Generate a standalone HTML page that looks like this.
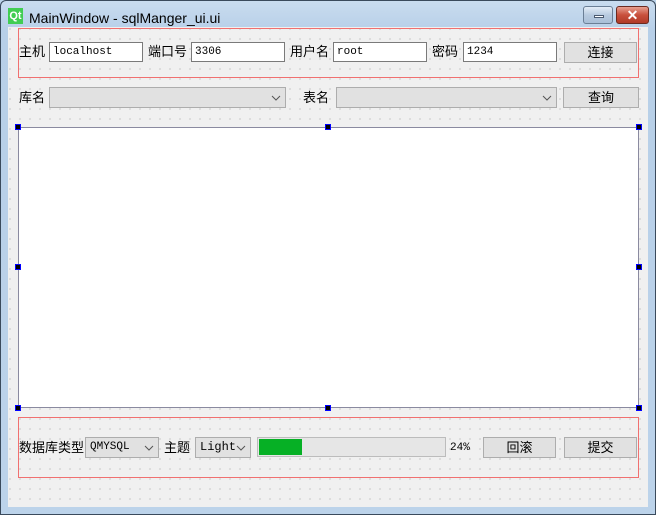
<!DOCTYPE html>
<html><head><meta charset="utf-8"><style>
*{margin:0;padding:0;box-sizing:border-box}
body{width:656px;height:515px;overflow:hidden;position:relative;background:#bcd3ea;font-family:"Liberation Sans","Noto Sans CJK SC",sans-serif;font-size:13px;color:#000}
.frame{position:absolute;left:0;top:0;width:656px;height:515px;border:1px solid #3a4a5c;border-radius:6px 6px 0 0;background:linear-gradient(#c9dcef,#b7cfe8 30px,#bcd3ea)}
.content{position:absolute;left:8px;top:27px;width:640px;height:480px;background-color:#f0f0f0;background-image:radial-gradient(circle,#a8a8a8 0.5px,transparent 0.8px);background-size:10px 10px;background-position:-3px -3px}
.a{position:absolute}
.lbl{position:absolute;font-size:13px;line-height:16px}
.in{position:absolute;height:20px;background:#fff;border:1px solid #7a7a7a;font-family:"Liberation Mono",monospace;font-size:11px;line-height:18px;padding-left:3px}
.btn{position:absolute;height:21px;background:#e1e1e1;border:1px solid #adadad;text-align:center;line-height:19px;font-size:13px}
.cb{position:absolute;height:21px;background:#e1e1e1;border:1px solid #adadad;font-family:"Liberation Mono",monospace;font-size:11px;line-height:19px;padding-left:4px}
.cb svg{position:absolute;right:4px;top:7px}
.red{position:absolute;border:1px solid #f07070}
.h{position:absolute;width:6px;height:6px;background:#000;border:1px solid #0000ff}
</style></head><body>
<div class="frame"></div>
<div class="a" style="left:8px;top:8px;width:15px;height:16px;background:#41cd52;color:#fff;font-weight:bold;font-size:11px;line-height:16px;text-align:center">Qt</div>
<div class="lbl" style="left:29px;top:10px;font-size:14px;color:#000">MainWindow - sqlManger_ui.ui</div>
<div class="a" style="left:583px;top:6px;width:30px;height:18px;border:1px solid #6b7f96;border-radius:3px;background:linear-gradient(#e4edf7,#b8cbe0 50%,#a9bfd8)"><div class="a" style="left:10px;top:8px;width:10px;height:3px;background:#fff;border:1px solid #4a5a70"></div></div>
<div class="a" style="left:616px;top:6px;width:33px;height:18px;border:1px solid #6b2a20;border-radius:3px;background:linear-gradient(#e8a090,#c8503c 50%,#b03a28);color:#fff;font-weight:bold;text-align:center;line-height:16px;font-size:14px">✕</div>
<div class="content"></div>

<div class="red" style="left:18px;top:28px;width:621px;height:50px"></div>
<div class="lbl" style="left:19px;top:44px">主机</div>
<div class="in" style="left:49px;top:42px;width:94px">localhost</div>
<div class="lbl" style="left:148px;top:44px">端口号</div>
<div class="in" style="left:191px;top:42px;width:94px">3306</div>
<div class="lbl" style="left:290px;top:44px">用户名</div>
<div class="in" style="left:333px;top:42px;width:94px">root</div>
<div class="lbl" style="left:432px;top:44px">密码</div>
<div class="in" style="left:463px;top:42px;width:94px">1234</div>
<div class="btn" style="left:564px;top:42px;width:73px">连接</div>

<div class="lbl" style="left:19px;top:90px">库名</div>
<div class="cb" style="left:49px;top:87px;width:237px"><svg width="10" height="6"><path d="M1 1l4 4 4-4" stroke="#555" fill="none"/></svg></div>
<div class="lbl" style="left:303px;top:90px">表名</div>
<div class="cb" style="left:336px;top:87px;width:221px"><svg width="10" height="6"><path d="M1 1l4 4 4-4" stroke="#555" fill="none"/></svg></div>
<div class="btn" style="left:563px;top:87px;width:76px">查询</div>

<div class="a" style="left:18px;top:127px;width:621px;height:281px;background:#fff;border:1px solid #8a8aa0"></div>
<div class="h" style="left:15px;top:124px"></div>
<div class="h" style="left:325px;top:124px"></div>
<div class="h" style="left:636px;top:124px"></div>
<div class="h" style="left:15px;top:264px"></div>
<div class="h" style="left:636px;top:264px"></div>
<div class="h" style="left:15px;top:405px"></div>
<div class="h" style="left:325px;top:405px"></div>
<div class="h" style="left:636px;top:405px"></div>

<div class="red" style="left:18px;top:417px;width:621px;height:61px"></div>
<div class="lbl" style="left:19px;top:440px">数据库类型</div>
<div class="cb" style="left:85px;top:437px;width:74px">QMYSQL<svg width="10" height="6"><path d="M1 1l4 4 4-4" stroke="#555" fill="none"/></svg></div>
<div class="lbl" style="left:164px;top:440px">主题</div>
<div class="cb" style="left:195px;top:437px;width:56px;font-size:12px">Light<svg width="10" height="6"><path d="M1 1l4 4 4-4" stroke="#555" fill="none"/></svg></div>
<div class="a" style="left:257px;top:437px;width:189px;height:20px;background:#e6e6e6;border:1px solid #bcbcbc"><div class="a" style="left:1px;top:1px;width:43px;height:16px;background:#06b025"></div></div>
<div class="lbl" style="left:450px;top:440px;font-family:'Liberation Mono',monospace;font-size:11px">24%</div>
<div class="btn" style="left:483px;top:437px;width:73px">回滚</div>
<div class="btn" style="left:564px;top:437px;width:73px">提交</div>
</body></html>
